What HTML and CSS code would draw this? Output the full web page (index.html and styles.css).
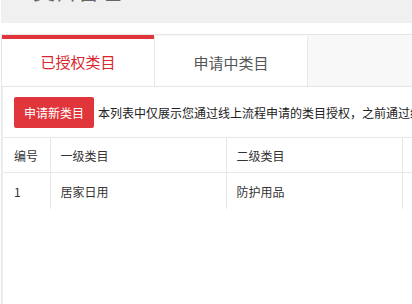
FILE: index.html
```html
<!DOCTYPE html>
<html lang="zh-CN">
<head>
<meta charset="utf-8">
<title>类目管理</title>
<link rel="stylesheet" href="styles.css">
</head>
<body>
<div class="page">
  <div class="head"><h1 class="title">类目管理</h1></div>
  <div class="box">
    <div class="tabs">
      <div class="tab tab-active">已授权类目</div>
      <div class="tab tab-normal">申请中类目</div>
      <div class="tab-rest"></div>
    </div>
    <div class="panel">
      <div class="toolbar">
        <button class="btn">申请新类目</button>
        <span class="tip">本列表中仅展示您通过线上流程申请的类目授权，之前通过线下流程申请的类目授权请联系运营查看</span>
      </div>
      <table class="grid">
        <colgroup>
          <col class="c1"><col class="c2"><col class="c3"><col class="c4">
        </colgroup>
        <thead>
          <tr><th>编号</th><th>一级类目</th><th>二级类目</th><th></th></tr>
        </thead>
        <tbody>
          <tr><td>1</td><td>居家日用</td><td>防护用品</td><td></td></tr>
        </tbody>
      </table>
    </div>
  </div>
</div>
</body>
</html>
```
FILE: styles.css
```css
html, body {
  margin: 0;
  padding: 0;
  background: #fff;
  overflow: hidden;
}
body {
  font-family: "Noto Sans CJK SC", "Microsoft YaHei", sans-serif;
  font-size: 12px;
  color: #333;
}
.page {
  padding-left: 1px;
  width: 700px;
}
.head {
  height: 23px;
  background: #f0f0f0;
  overflow: hidden;
}
.title {
  margin: -22px 0 0 0;
  padding-left: 32px;
  font-size: 22px;
  line-height: 22px;
  font-weight: normal;
  color: #666;
}
.box {
  margin-top: 11px;
  border-top: 1px solid #e6e6e6;
  border-left: 1px solid #e6e6e6;
}
.tabs {
  display: flex;
  height: 51px;
  border-bottom: 1px solid #e6e6e6;
  background: #f8f8f8;
}
.tab {
  width: 152px;
  display: flex;
  align-items: center;
  justify-content: center;
  font-size: 15px;
  background: #fff;
  box-sizing: border-box;
}
.tab-active {
  border-top: 4px solid #e0363b;
  color: #d9262c;
  padding-bottom: 2px;
}
.tab-normal {
  width: 154px;
  margin-top: 1px;
  border-left: 1px solid #e9e9e9;
  border-right: 1px solid #e9e9e9;
  color: #555;
  padding-top: 2px;
}
.tab-rest {
  flex: 1;
}
.panel {
  border-left: 1px solid #f0f0f0;
  min-height: 240px;
}
.toolbar {
  display: flex;
  align-items: center;
  padding: 10px 0 9px 11px;
  white-space: nowrap;
}
.btn {
  width: 80px;
  height: 31px;
  border: none;
  border-radius: 2px;
  background: #e0363b;
  color: #fff;
  font-family: inherit;
  font-size: 12px;
  padding: 0;
}
.tip {
  margin-left: 4px;
  color: #222;
}
.grid {
  border-collapse: collapse;
  table-layout: fixed;
  width: 600px;
  border-top: 1px solid #e8e8e8;
}
.c1 { width: 47px; }
.c2 { width: 176px; }
.c3 { width: 176px; }
.grid th,
.grid td {
  text-align: left;
  font-weight: normal;
  color: #333;
  padding: 0 0 0 10px;
  border-right: 1px solid #e8e8e8;
}
.grid th:first-child,
.grid td:first-child {
  padding-left: 11px;
}
.grid th {
  height: 34px;
  border-bottom: 1px solid #e8e8e8;
}
.grid td {
  height: 36px;
}
```
